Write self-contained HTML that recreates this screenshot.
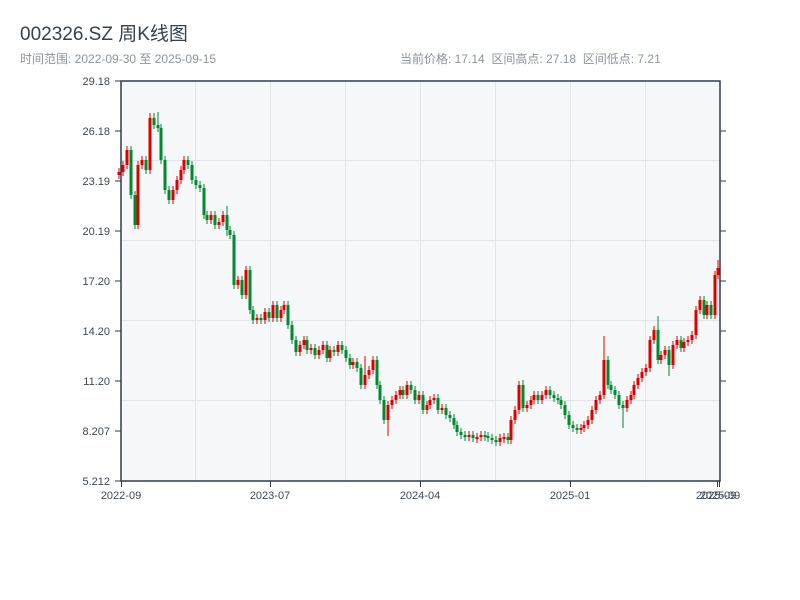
<!DOCTYPE html>
<html><head><meta charset="utf-8"><style>
body{margin:0;background:#fff;width:800px;height:600px;overflow:hidden;font-family:"Liberation Sans","Noto Sans CJK SC",sans-serif}
</style></head><body>
<svg width="800" height="600" xmlns="http://www.w3.org/2000/svg" style="position:absolute;left:0;top:0">
<text x="20" y="40" font-size="19" fill="#36404d" font-family="Liberation Sans,Noto Sans CJK SC,sans-serif">002326.SZ 周K线图</text>
<text x="20" y="63" font-size="12" fill="#8c939c" font-family="Liberation Sans,Noto Sans CJK SC,sans-serif">时间范围: 2022-09-30 至 2025-09-15</text>
<text x="400" y="63" font-size="12" fill="#8c939c" font-family="Liberation Sans,Noto Sans CJK SC,sans-serif" xml:space="preserve">当前价格: 17.14  区间高点: 27.18  区间低点: 7.21</text>
<rect x="121" y="81" width="599" height="400" fill="#f6f7f9"/>
<g stroke="#e1e4ea" stroke-width="1">
<line x1="195.5" y1="81" x2="195.5" y2="481"/><line x1="270.5" y1="81" x2="270.5" y2="481"/><line x1="345.5" y1="81" x2="345.5" y2="481"/><line x1="420.5" y1="81" x2="420.5" y2="481"/><line x1="495.5" y1="81" x2="495.5" y2="481"/><line x1="570.5" y1="81" x2="570.5" y2="481"/><line x1="645.5" y1="81" x2="645.5" y2="481"/>
<line x1="121" y1="160.5" x2="720" y2="160.5"/><line x1="121" y1="240.5" x2="720" y2="240.5"/><line x1="121" y1="320.5" x2="720" y2="320.5"/><line x1="121" y1="400.5" x2="720" y2="400.5"/>
</g>
<!-- red bodies -->
<path stroke="#dd0000" stroke-width="3" fill="none" d="M119,172V175M123,165V172M127,150V165M138,165V225M142,160V165M150,118V170M173,190V200M177,180V190M181,170V180M184,160V170M211,215V220M219,222V225M223,215V222M238,280V285M246,270V295M257,318V320M265,312V320M273,305V318M281,310V318M284,305V310M300,345V352M304,340V345M311,348V350M319,350V355M323,345V350M330,350V358M338,345V352M353,362V365M365,375V385M369,370V375M373,360V370M388,405V420M392,400V405M396,395V400M400,390V395M407,385V395M419,395V400M427,405V410M430,400V405M434,398V400M442,408V410M469,435V437M477,437V439M481,435V437M500,438V442M504,437V439M511,420V440M515,410V420M519,385V410M527,405V408M531,400V405M534,395V400M542,395V400M546,390V395M581,428V430M584,425V428M588,420V425M592,410V420M596,400V410M600,395V400M604,360V395M627,400V408M631,395V400M634,385V395M638,378V385M642,372V378M646,368V372M650,340V368M654,330V340M661,355V360M665,350V355M673,345V365M677,340V345M684,342V348M688,340V342M692,335V340M696,310V335M700,300V310M707,305V315M715,275V315M718,268V275"/>
<path stroke="#dd0000" stroke-width="1" fill="none" d="M119,168V179M123,161V176M127,146V169M138,161V229M142,156V169M150,113V174M173,186V204M177,176V194M181,166V184M184,156V174M211,211V224M219,218V229M223,211V226M238,276V289M246,266V299M257,314V324M265,308V324M273,301V322M281,306V322M284,301V314M300,341V356M304,336V349M311,344V354M319,346V359M323,341V354M330,346V362M338,341V356M353,358V369M365,356V389M369,366V379M373,356V374M388,401V436M392,396V409M396,391V404M400,386V399M407,381V399M419,391V404M427,401V414M430,396V409M434,394V404M442,404V414M469,431V441M477,433V443M481,431V441M500,434V446M504,433V443M511,416V444M515,406V424M519,381V414M527,401V412M531,396V409M534,391V404M542,391V404M546,386V399M581,424V434M584,421V432M588,416V429M592,406V424M596,396V414M600,391V404M604,336V399M627,396V412M631,391V404M634,381V399M638,374V389M642,368V382M646,364V376M650,336V372M654,326V344M661,351V364M665,346V359M673,341V369M677,336V349M684,338V352M688,336V346M692,331V344M696,306V339M700,296V314M707,301V319M715,271V319M718,260V279"/>
<!-- green bodies -->
<path stroke="#008a2e" stroke-width="3" fill="none" d="M131,150V195M135,195V225M146,160V170M154,118V125M158,125V128M161,128V160M165,160V190M169,190V200M188,160V165M192,165V180M196,180V185M200,185V188M204,188V215M207,215V220M215,215V225M227,215V230M230,230V235M234,235V285M242,280V295M250,270V310M253,310V320M261,318V320M269,312V318M277,305V318M288,305V325M292,325V340M296,340V352M307,340V350M315,348V355M327,345V358M334,350V352M342,345V350M346,350V358M350,358V365M357,362V368M361,368V385M377,360V385M380,385V400M384,400V420M403,390V395M411,385V390M415,390V400M423,395V410M438,398V410M446,408V415M450,415V418M454,418V425M457,425V432M461,432V435M465,435V437M473,435V438M485,435V437M488,436V438M492,438V440M496,440V442M508,437V440M523,385V408M538,395V400M550,390V395M554,395V398M558,398V400M561,400V405M565,405V415M569,415V425M573,425V428M577,428V430M608,360V385M611,385V390M615,390V395M619,395V405M623,405V408M658,330V360M669,350V365M681,340V348M704,300V315M711,305V315"/>
<path stroke="#008a2e" stroke-width="1" fill="none" d="M131,146V199M135,191V229M146,156V174M154,113V129M158,112V132M161,124V164M165,156V194M169,186V204M188,156V169M192,161V184M196,176V189M200,181V192M204,184V219M207,211V224M215,211V229M227,206V236M230,226V239M234,231V289M242,276V299M250,266V314M253,306V324M261,314V324M269,308V322M277,301V322M288,301V329M292,321V344M296,336V356M307,336V354M315,344V359M327,341V362M334,346V356M342,341V354M346,346V362M350,354V369M357,358V372M361,364V389M377,356V389M380,381V404M384,396V424M403,386V399M411,381V394M415,386V404M423,391V414M438,394V414M446,404V419M450,411V422M454,414V429M457,421V436M461,428V439M465,431V441M473,431V442M485,431V441M488,432V442M492,434V444M496,436V446M508,433V444M523,380V412M538,391V404M550,386V399M554,391V402M558,394V404M561,396V409M565,401V419M569,411V429M573,421V432M577,424V434M608,356V389M611,381V394M615,386V399M619,391V409M623,401V428M658,316V364M669,346V376M681,336V352M704,296V319M711,301V319"/>
<g stroke="#2e3a4a" stroke-width="1.5" fill="none">
<rect x="121" y="81" width="599" height="400"/>
</g>
<g stroke="#2e3a4a" stroke-width="1">
<line x1="115" y1="81" x2="121" y2="81"/><line x1="115" y1="131" x2="121" y2="131"/><line x1="115" y1="181" x2="121" y2="181"/><line x1="115" y1="231" x2="121" y2="231"/><line x1="115" y1="281" x2="121" y2="281"/><line x1="115" y1="331" x2="121" y2="331"/><line x1="115" y1="381" x2="121" y2="381"/><line x1="115" y1="431" x2="121" y2="431"/><line x1="115" y1="481" x2="121" y2="481"/>
<line x1="720" y1="131" x2="726" y2="131"/><line x1="720" y1="181" x2="726" y2="181"/><line x1="720" y1="231" x2="726" y2="231"/><line x1="720" y1="281" x2="726" y2="281"/><line x1="720" y1="331" x2="726" y2="331"/><line x1="720" y1="381" x2="726" y2="381"/><line x1="720" y1="431" x2="726" y2="431"/>
<line x1="121.5" y1="481" x2="121.5" y2="487"/><line x1="270.5" y1="481" x2="270.5" y2="487"/><line x1="420.5" y1="481" x2="420.5" y2="487"/><line x1="570.5" y1="481" x2="570.5" y2="487"/><line x1="717.5" y1="481" x2="717.5" y2="487"/><line x1="719.5" y1="481" x2="719.5" y2="487"/>
</g>
<g font-size="11" fill="#3d4756" text-anchor="end" font-family="Liberation Sans,sans-serif">
<text x="110" y="85">29.18</text><text x="110" y="135">26.18</text><text x="110" y="185">23.19</text><text x="110" y="235">20.19</text><text x="110" y="285">17.20</text><text x="110" y="335">14.20</text><text x="110" y="385">11.20</text><text x="110" y="435">8.207</text><text x="110" y="485">5.212</text>
</g>
<g font-size="11" fill="#3d4756" text-anchor="middle" font-family="Liberation Sans,sans-serif">
<text x="121" y="499">2022-09</text><text x="270" y="499">2023-07</text><text x="420" y="499">2024-04</text><text x="570" y="499">2025-01</text><text x="716" y="499">2025-09</text><text x="720" y="499">2025-09</text>
</g>
</svg>
</body></html>
